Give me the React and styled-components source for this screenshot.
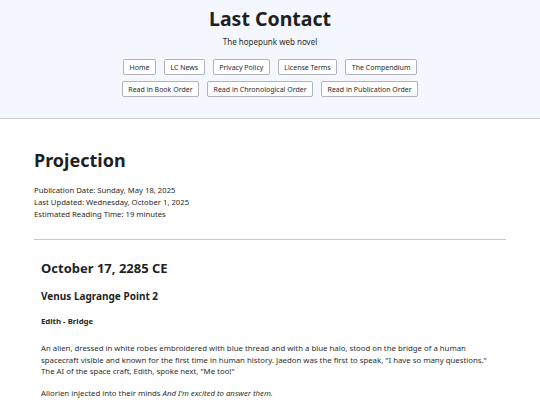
import styled, { createGlobalStyle } from "styled-components";

const GlobalStyle = createGlobalStyle`
  html, body {
    margin: 0;
    padding: 0;
    background: #ffffff;
  }
  body {
    font-family: "Noto Sans", "Open Sans", sans-serif;
    color: #222;
  }
`;

// Header
const Header = styled.header`
  background: #f4f7fd;
  border-bottom: 1px solid #c9ccd1;
  padding: 7px 0 21px;
  text-align: center;
`;

const SiteTitle = styled.h1`
  margin: 0;
  font-size: 19.5px;
  line-height: 24px;
  font-weight: 700;
  color: #1f1f1f;
`;

const Tagline = styled.p`
  margin: 5px 0 0;
  font-size: 8px;
  line-height: 12px;
  color: #2a2a2a;
`;

const Nav = styled.nav`
  margin-top: 11px;
  display: flex;
  flex-direction: column;
  align-items: center;
  gap: 6px;
`;

const NavRow = styled.div`
  display: flex;
  justify-content: center;
  gap: 8px;
`;

const NavButton = styled.a`
  display: inline-flex;
  align-items: center;
  height: 16px;
  box-sizing: border-box;
  padding: 0 5.5px;
  background: #ffffff;
  border: 1px solid #b0b4ba;
  border-radius: 2px;
  font-size: 7px;
  color: #2a2a2a;
  text-decoration: none;
  white-space: nowrap;
`;

// Content
const Main = styled.main`
  padding: 30px 34px 0;
`;

const PageTitle = styled.h1`
  margin: 0;
  font-size: 18px;
  line-height: 22px;
  font-weight: 700;
  color: #1f1f1f;
`;

const Meta = styled.div`
  margin-top: 13px;
  font-size: 7.7px;
  line-height: 12px;
  color: #2a2a2a;
`;

const Rule = styled.hr`
  margin: 19px 0 0;
  border: none;
  border-top: 1px solid #c9c9c9;
`;

const Chapter = styled.section`
  padding: 20px 7px 0;
`;

const DateHeading = styled.h2`
  margin: 0;
  font-size: 13px;
  line-height: 16px;
  font-weight: 700;
  color: #1f1f1f;
`;

const PlaceHeading = styled.h3`
  margin: 14px 0 0;
  font-size: 10px;
  line-height: 13px;
  font-weight: 700;
  color: #1f1f1f;
`;

const SceneHeading = styled.h4`
  margin: 13px 0 0;
  font-size: 7.8px;
  line-height: 11px;
  font-weight: 700;
  color: #1f1f1f;
`;

const Para = styled.p`
  margin: ${(p) => (p.$first ? "16px" : "10px")} 0 0;
  font-size: 7.8px;
  line-height: 11.6px;
  color: #2e2e2e;
`;

const navTop = ["Home", "LC News", "Privacy Policy", "License Terms", "The Compendium"];
const navBottom = [
  "Read in Book Order",
  "Read in Chronological Order",
  "Read in Publication Order",
];

export default function App() {
  return (
    <>
      <GlobalStyle />
      <Header>
        <SiteTitle>Last Contact</SiteTitle>
        <Tagline>The hopepunk web novel</Tagline>
        <Nav>
          <NavRow>
            {navTop.map((label) => (
              <NavButton key={label} href="#">
                {label}
              </NavButton>
            ))}
          </NavRow>
          <NavRow>
            {navBottom.map((label) => (
              <NavButton key={label} href="#">
                {label}
              </NavButton>
            ))}
          </NavRow>
        </Nav>
      </Header>

      <Main>
        <PageTitle>Projection</PageTitle>
        <Meta>
          <div>Publication Date: Sunday, May 18, 2025</div>
          <div>Last Updated: Wednesday, October 1, 2025</div>
          <div>Estimated Reading Time: 19 minutes</div>
        </Meta>
        <Rule />

        <Chapter>
          <DateHeading>October 17, 2285 CE</DateHeading>
          <PlaceHeading>Venus Lagrange Point 2</PlaceHeading>
          <SceneHeading>Edith - Bridge</SceneHeading>
          <Para $first>
            An alien, dressed in white robes embroidered with blue thread and
            with a blue halo, stood on the bridge of a human spacecraft visible
            and known for the first time in human history. Jaedon was the first
            to speak, "I have so many questions." The AI of the space craft,
            Edith, spoke next, "Me too!"
          </Para>
          <Para>
            Allorien injected into their minds <em>And I'm excited to answer them.</em>
          </Para>
        </Chapter>
      </Main>
    </>
  );
}
